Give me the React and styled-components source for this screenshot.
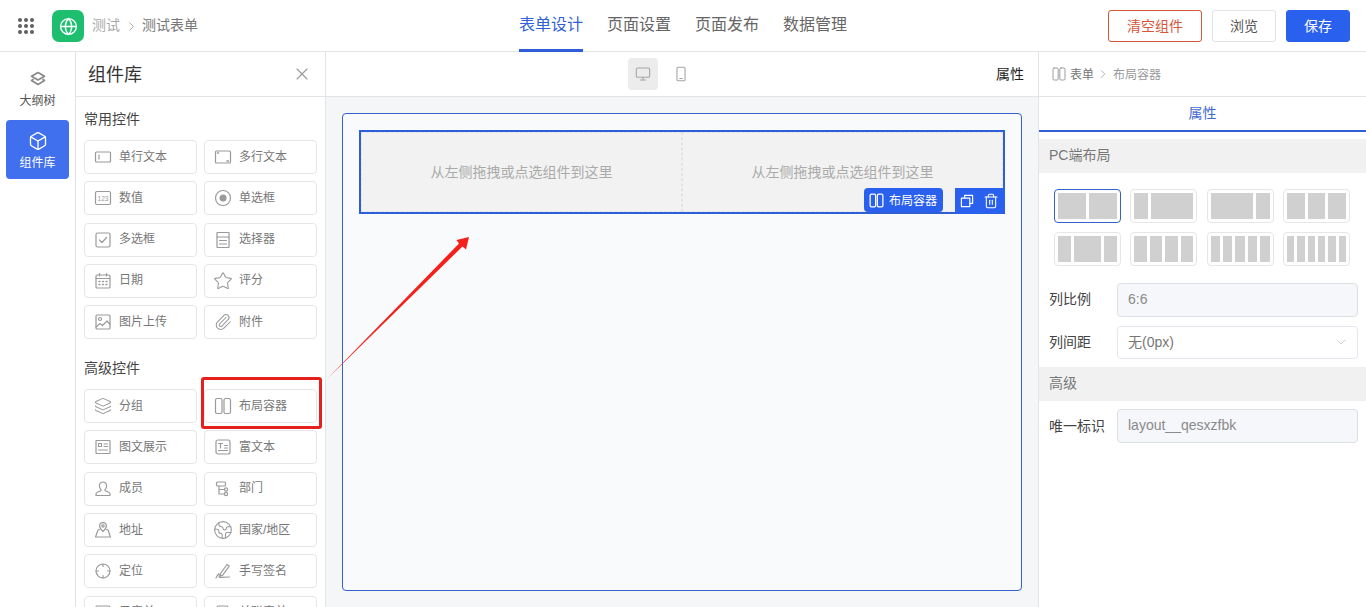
import React from "react";
import styled, { createGlobalStyle } from "styled-components";
import {
  Layers, Box, Globe, Monitor, Trash2, X, ChevronDown, ChevronRight,
  Paperclip, Star, Earth,
} from "lucide-react";

const Global = createGlobalStyle`
  html, body { margin: 0; padding: 0; height: 100%; background: #fff; overflow: hidden; }
  body { font-family: "Liberation Sans", "Noto Sans CJK SC", sans-serif; }
  #root { height: 100%; }
  * { box-sizing: border-box; }
`;

const Page = styled.div`position: relative; width: 1366px; height: 607px; overflow: hidden; display: flex; flex-direction: column;`;

const Header = styled.header`
  height: 52px; flex: none; display: grid; grid-template-columns: 1fr auto 1fr; align-items: center;
  border-bottom: 1px solid #e3e4e6; background: #fff;
`;
const HeaderLeft = styled.div`display: flex; align-items: center; padding-left: 18px;`;
const Grip = styled.svg`width: 16px; height: 16px; fill: #5f5f5f; margin-right: 18px; flex: none;`;
const Logo = styled.div`
  width: 32px; height: 32px; border-radius: 7px; background: #1dbf6f; color: #fff;
  display: flex; align-items: center; justify-content: center; margin-right: 8px;
`;
const Crumb = styled.span`font-size: 14px; line-height: 20px; padding-bottom: 2px; color: ${(p) => (p.$strong ? "#777" : "#aaa")};`;
const CrumbArrow = styled.span`display: flex; width: 22px; justify-content: center; color: #999;`;
const Tabs = styled.nav`display: flex; gap: 24px; height: 52px; align-self: start;`;
const Tab = styled.div`
  font-size: 16px; line-height: 50px; height: 52px; color: ${(p) => (p.$active ? "#2f5fd6" : "#666")};
  border-bottom: 3px solid ${(p) => (p.$active ? "#2f5fd6" : "transparent")};
`;
const HeaderRight = styled.div`display: flex; justify-content: flex-end; gap: 10px; padding-right: 16px;`;
const Button = styled.button`
  height: 32px; width: ${(p) => p.$w || 64}px; border-radius: 3px; font: inherit; font-size: 14px; padding: 0 0 2px;
  border: 1px solid ${(p) => (p.$kind === "danger" ? "#d4573a" : p.$kind === "primary" ? "#2a60ee" : "#e1e3e6")};
  background: ${(p) => (p.$kind === "primary" ? "#2a60ee" : "#fff")};
  color: ${(p) => (p.$kind === "danger" ? "#d4573a" : p.$kind === "primary" ? "#fff" : "#555")};
`;

const Body = styled.div`flex: 1; display: flex; min-height: 0;`;

const Rail = styled.aside`
  width: 76px; flex: none; border-right: 1px solid #e3e4e6; padding: 6px 6px 0; display: flex; flex-direction: column; gap: 3px;
`;
const RailItem = styled.div`
  height: 59px; width: 63px; border-radius: 4px; display: flex; flex-direction: column; align-items: center;
  padding-top: 11px; gap: 2px; font-size: 12px; line-height: 20px;
  background: ${(p) => (p.$active ? "#4170ee" : "transparent")};
  color: ${(p) => (p.$active ? "#fff" : "#555")};
  svg { color: ${(p) => (p.$active ? "#fff" : "#8a8a8a")}; }
`;

const Panel = styled.section`width: 250px; flex: none; border-right: 1px solid #e3e4e6; display: flex; flex-direction: column; overflow: hidden;`;
const PanelHead = styled.div`
  height: 45px; flex: none; border-bottom: 1px solid #e3e4e6; display: flex; align-items: center; justify-content: space-between;
  padding: 0 13px 2px 12px; font-size: 18px; color: #333;
  svg { color: #999; margin-top: 2px; }
`;
const PanelBody = styled.div`padding: 12px 8px 0; overflow: hidden;`;
const GroupTitle = styled.div`font-size: 14px; line-height: 20px; color: #444; margin-top: ${(p) => p.$mt || 0}px; margin-bottom: 11px;`;
const ItemGrid = styled.div`display: grid; grid-template-columns: 113px 113px; column-gap: 7px; row-gap: 7.3px;`;
const Item = styled.div`
  height: 34px; border: 1px solid #e5e6e9; border-radius: 4px; display: flex; align-items: center; padding-left: 8px; gap: 6px;
  font-size: 12px; color: #777; background: #fff;
  svg { flex: none; color: #9a9a9a; }
`;
const ItemLabel = styled.span`line-height: 18px; padding-bottom: 1px;`;
const IconSlot = styled.span`width: 20px; height: 20px; flex: none; display: flex; align-items: center; justify-content: center;`;

const Main = styled.main`flex: 1; min-width: 0; display: flex; flex-direction: column; background: #f5f6f8;`;
const MainBar = styled.div`
  height: 45px; flex: none; border-bottom: 1px solid #e3e4e6; background: #fff; display: grid; grid-template-columns: 1fr auto 1fr; align-items: center;
  padding-right: 14px;
`;
const Devices = styled.div`grid-column: 2; display: flex; align-items: center; gap: 8px; margin-top: -1px; margin-right: 26px;`;
const DeviceBtn = styled.div`
  width: 30px; height: 32px; border-radius: 4px; display: flex; align-items: center; justify-content: center; color: #a5a5a5;
  background: ${(p) => (p.$active ? "#ececec" : "transparent")};
`;
const PropLabel = styled.div`justify-self: end; font-size: 14px; color: #222; padding-bottom: 2px;`;
const Canvas = styled.div`flex: 1; padding: 16px;`;
const FormBox = styled.div`height: 478px; border: 1px solid #3460d0; border-radius: 4px; background: #f9fafb; padding: 16px;`;
const Selected = styled.div`position: relative; height: 84px; border: 2px solid #2f5fd6; display: grid; grid-template-columns: 1fr 1fr;`;
const Cell = styled.div`
  background: #f2f2f2; border: 1px dashed #e2e2e8; display: flex; align-items: center; justify-content: center; font-size: 14px; color: #aaa; padding-bottom: 2px;
`;
const LayoutTag = styled.div`
  position: absolute; right: 60px; bottom: 0; height: 24px; width: 79px; background: #2a60ee; color: #fff; border-radius: 4px;
  display: flex; align-items: center; padding-left: 4px; gap: 4px; font-size: 12px;
`;
const TagLabel = styled.span`padding-bottom: 2px;`;
const Actions = styled.div`
  position: absolute; right: -2px; bottom: -2px; width: 50px; height: 26px; background: #2a60ee; color: #fff;
  display: flex; align-items: center; justify-content: space-between; padding: 0 6px 0 4px;
`;

const Side = styled.aside`width: 328px; flex: none; border-left: 1px solid #e3e4e6; display: flex; flex-direction: column;`;
const SideCrumb = styled.div`
  height: 45px; flex: none; border-bottom: 1px solid #e3e4e6; display: flex; align-items: center; padding-left: 12px; font-size: 12px; color: #777;
  svg { color: #999; flex: none; }
`;
const SideCrumbText = styled.span`padding-bottom: 2px; margin-left: 3px; color: ${(p) => (p.$muted ? "#999" : "#777")};`;
const SideCrumbGap = styled.span`margin: 0 0 0 2px; display: flex;`;
const SideTab = styled.div`
  height: 35px; flex: none; border-bottom: 2px solid #2f5fd6; color: #3f68d6; font-size: 14px; text-align: center; line-height: 32px;
`;
const SectionBar = styled.div`
  height: 34px; flex: none; margin-top: ${(p) => p.$mt}px; background: #f1f1f1; padding-left: 10px; font-size: 14px; line-height: 33px; color: #777;
`;
const LayoutGrid = styled.div`display: grid; grid-template-columns: repeat(4, 67px); gap: 9.3px; padding: 16px 0 0 15px;`;
const LayoutOption = styled.div`
  height: 34px; padding: 3px; display: flex; gap: 3px; border-radius: 4px; background: #fff;
  border: 1px solid ${(p) => (p.$active ? "#3460d0" : "#e6e6e6")};
`;
const Bar = styled.div`background: #d0d0d0; flex: ${(p) => p.$f} 1 0;`;
const FieldRow = styled.div`display: flex; align-items: center; padding: 0 8px 0 10px; margin-top: ${(p) => p.$mt}px;`;
const FieldLabel = styled.label`width: 68px; flex: none; font-size: 14px; color: #444; padding-bottom: 3px;`;
const FieldValue = styled.div`
  flex: 1; height: 33.3px; border: 1px solid ${(p) => (p.$readonly ? "#dcdfe6" : "#e4e7ed")}; border-radius: 4px; padding: 0 10px 2px;
  background: ${(p) => (p.$readonly ? "#f5f7fa" : "#fff")}; display: flex; align-items: center; justify-content: space-between;
  font-size: 14px; color: ${(p) => (p.$readonly ? "#8a8a8a" : "#777")};
  svg { color: #c0c4cc; margin-right: -2px; margin-top: 2px; }
`;

const Highlight = styled.div`
  position: absolute; left: 201px; top: 377px; width: 121px; height: 52px; border: 3px solid #e6201c; border-radius: 3px; pointer-events: none;
`;
const ArrowLayer = styled.svg`position: absolute; left: 0; top: 0; width: 1366px; height: 607px; pointer-events: none;`;

const S = ({ children, size = 20, width = 1.2 }) => (
  <svg width={size} height={size} viewBox="0 0 20 20" fill="none" stroke="currentColor" strokeWidth={width} strokeLinecap="round" strokeLinejoin="round">
    {children}
  </svg>
);
const Columns = ({ size = 20, width = 1.2 }) => (
  <S size={size} width={width}>
    <rect x="2.500" y="2.500" width="6.500" height="15" rx="1.500" />
    <rect x="11" y="2.500" width="6.500" height="15" rx="1.500" />
  </S>
);
const lu = { size: 18, strokeWidth: 1.4 };
const L = (Icon) => <IconSlot><Icon {...lu} /></IconSlot>;

const common = [
  ["单行文本", <S><rect x="2.500" y="5" width="15" height="10" rx="1" /><path d="M6 8v4" /></S>],
  ["多行文本", <S><rect x="2.500" y="4" width="15" height="12" rx="1" /><path d="M4.500 6h1M14 14h1.500" strokeWidth="1.600" /></S>],
  ["数值", <S><rect x="2.500" y="3.500" width="15" height="13" rx="1.500" /><text x="10" y="12.600" fontSize="6.600" textAnchor="middle" fill="currentColor" stroke="none" fontFamily="Liberation Sans">123</text></S>],
  ["单选框", <S><circle cx="10" cy="10" r="7.500" /><circle cx="10" cy="10" r="3" fill="currentColor" /></S>],
  ["多选框", <S><rect x="3" y="3" width="14" height="14" rx="1.500" /><path d="m6.500 10 2.500 2.500 4.500-5" /></S>],
  ["选择器", <S><rect x="4" y="2.500" width="12" height="15" rx=".5" /><path d="M4 7h12M6.500 10.500h7M6.500 14h7" /></S>],
  ["日期", <S><rect x="3" y="4" width="14" height="13" rx="1" /><path d="M3 7.500h14M6.500 2.500V5M13.500 2.500V5" /><path d="M6 10.500h1M9.500 10.500h1M13 10.500h1M6 13.500h1M9.500 13.500h1M13 13.500h1" strokeWidth="1.400" /></S>],
  ["评分", <Star size={20} strokeWidth={1.3} />],
  ["图片上传", <S><rect x="3" y="3" width="14" height="14" rx="1" /><circle cx="7" cy="7" r="1.500" /><path d="m3 15 4-3.500 2.500 2L14 9l3 3.500" /></S>],
  ["附件", L(Paperclip)],
];
const advanced = [
  ["分组", L(Layers)],
  ["布局容器", <Columns />],
  ["图文展示", <S><rect x="3" y="3.500" width="14" height="13" rx=".5" /><rect x="5.500" y="6.500" width="3" height="3" /><path d="M11 7h3.500M11 9.500h3.500M5.500 13h9" /></S>],
  ["富文本", <S><rect x="3" y="3" width="14" height="14" rx="2" /><path d="M5.500 6.500h4M7.500 6.500v4.500M11.500 8.500h3M11.500 11h3M5.500 13.500h9" /></S>],
  ["成员", <S><path d="M10 3a3.600 3.600 0 0 0-3.600 3.800c0 1.600.7 3 1.600 3.800v1.200c-2 .6-5 1.500-5 3.200v1.500h14v-1.500c0-1.700-3-2.600-5-3.200v-1.200c.9-.8 1.600-2.200 1.600-3.800A3.600 3.600 0 0 0 10 3Z" /></S>],
  ["部门", <S><rect x="3.500" y="3" width="9" height="4" rx="1" /><path d="M6 7v8h5M6 10.500h5" /><circle cx="13" cy="10.500" r="1.600" /><circle cx="13" cy="15" r="1.600" /></S>],
  ["地址", <S><path d="M10 11.500S6.600 8.400 6.600 6a3.400 3.400 0 0 1 6.800 0c0 2.400-3.400 5.500-3.400 5.500Z" /><circle cx="10" cy="6" r="1.200" /><path d="M6.500 9.500 5 10l-2.500 7h15L15 10l-1.500-.5" /></S>],
  ["国家/地区", <Earth size={20} strokeWidth={1.3} />],
  ["定位", <S><circle cx="10" cy="10" r="7" /><path d="M10 3v2.500M10 14.500V17M3 10h2.500M14.500 10H17" /></S>],
  ["手写签名", <S><path d="M7.500 12.500 14 3.500l2.200 1.600-6.500 9-2.600 1 .4-2.600Z" /><path d="M3 17c1-2 2.200-4.500 3-4s-.5 3.500.5 3.500 1.500-.5 10-.5" /></S>],
  ["子表单", <S><rect x="3" y="3" width="14" height="14" rx="1" /></S>],
  ["关联表单", <S><rect x="4" y="3" width="11" height="14" rx="1" /></S>],
];
const layouts = [[6, 6], [3, 9], [9, 3], [4, 4, 4], [3, 6, 3], [3, 3, 3, 3], [1, 1, 1, 1, 1], [1, 1, 1, 1, 1, 1]];

const ItemList = ({ items }) => (
  <ItemGrid>
    {items.map(([label, icon]) => (
      <Item key={label}>{icon}<ItemLabel>{label}</ItemLabel></Item>
    ))}
  </ItemGrid>
);

export default function App() {
  return (
    <Page>
      <Global />
      <Header>
        <HeaderLeft>
          <Grip viewBox="0 0 16 16">
            {[2, 8, 14].flatMap((y) => [2, 8, 14].map((x) => <circle key={`${x}-${y}`} cx={x} cy={y} r="2" />))}
          </Grip>
          <Logo><Globe size={19} strokeWidth={1.7} /></Logo>
          <Crumb>测试</Crumb>
          <CrumbArrow><ChevronRight size={15} strokeWidth={1.4} /></CrumbArrow>
          <Crumb $strong>测试表单</Crumb>
        </HeaderLeft>
        <Tabs>
          <Tab $active>表单设计</Tab>
          <Tab>页面设置</Tab>
          <Tab>页面发布</Tab>
          <Tab>数据管理</Tab>
        </Tabs>
        <HeaderRight>
          <Button $kind="danger" $w={94}>清空组件</Button>
          <Button>浏览</Button>
          <Button $kind="primary">保存</Button>
        </HeaderRight>
      </Header>
      <Body>
        <Rail>
          <RailItem>
            <S size={20} width={1.700}>
              <path d="m10 3.500 6.500 3.700L10 11 3.500 7.200 10 3.500Z" />
              <path d="M5 10.500 3.500 11.500 10 15.500l6.500-4-1.500-1" />
            </S>
            <span>大纲树</span>
          </RailItem>
          <RailItem $active><Box size={20} strokeWidth={1.6} /><span>组件库</span></RailItem>
        </Rail>
        <Panel>
          <PanelHead>组件库<X size={20} strokeWidth={1.3} /></PanelHead>
          <PanelBody>
            <GroupTitle>常用控件</GroupTitle>
            <ItemList items={common} />
            <GroupTitle $mt={19}>高级控件</GroupTitle>
            <ItemList items={advanced} />
          </PanelBody>
        </Panel>
        <Main>
          <MainBar>
            <Devices>
              <DeviceBtn $active><Monitor size={16} strokeWidth={1.6} /></DeviceBtn>
              <DeviceBtn>
                <S size={18} width={1.2}>
                  <rect x="5.500" y="2.500" width="9" height="15" rx="1.500" />
                  <path d="M8.500 15h3" />
                </S>
              </DeviceBtn>
            </Devices>
            <PropLabel>属性</PropLabel>
          </MainBar>
          <Canvas>
            <FormBox>
              <Selected>
                <Cell>从左侧拖拽或点选组件到这里</Cell>
                <Cell>从左侧拖拽或点选组件到这里</Cell>
                <LayoutTag><Columns size={17} width={1.500} /><TagLabel>布局容器</TagLabel></LayoutTag>
                <Actions>
                  <S size={16} width={1.500}>
                    <path d="M7 6V3h10v10h-3" />
                    <rect x="3" y="6.500" width="10.500" height="10.500" />
                  </S>
                  <Trash2 size={16} strokeWidth={1.6} />
                </Actions>
              </Selected>
            </FormBox>
          </Canvas>
        </Main>
        <Side>
          <SideCrumb>
            <Columns size={16} />
            <SideCrumbText>表单</SideCrumbText>
            <SideCrumbGap><ChevronRight size={14} strokeWidth={1.300} /></SideCrumbGap>
            <SideCrumbText $muted>布局容器</SideCrumbText>
          </SideCrumb>
          <SideTab>属性</SideTab>
          <SectionBar $mt={7}>PC端布局</SectionBar>
          <LayoutGrid>
            {layouts.map((cols, i) => (
              <LayoutOption key={i} $active={i === 0}>
                {cols.map((f, j) => <Bar key={j} $f={f} />)}
              </LayoutOption>
            ))}
          </LayoutGrid>
          <FieldRow $mt={17}>
            <FieldLabel>列比例</FieldLabel>
            <FieldValue $readonly>6:6</FieldValue>
          </FieldRow>
          <FieldRow $mt={9}>
            <FieldLabel>列间距</FieldLabel>
            <FieldValue>无(0px)<ChevronDown size={16} strokeWidth={1.2} /></FieldValue>
          </FieldRow>
          <SectionBar $mt={8.5}>高级</SectionBar>
          <FieldRow $mt={8}>
            <FieldLabel>唯一标识</FieldLabel>
            <FieldValue $readonly>layout__qesxzfbk</FieldValue>
          </FieldRow>
        </Side>
      </Body>
      <Highlight />
      <ArrowLayer viewBox="0 0 1366 607">
        <polygon points="328,378 459,243.500 456.500,240 469,237 466,249.500 462.500,246.500" fill="#f5201a" />
      </ArrowLayer>
    </Page>
  );
}
